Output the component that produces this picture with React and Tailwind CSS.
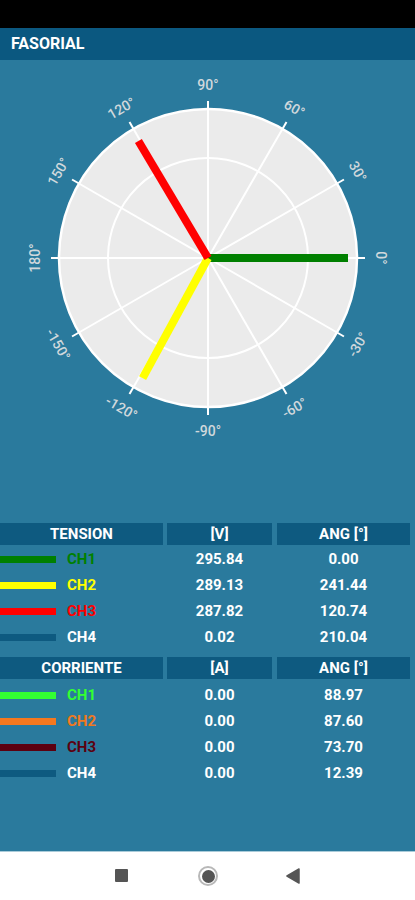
import React from "react";

const CX = 208;
const CY = 198;
const R = 149;

function Polar() {
  const angles = [0, 30, 60, 90, 120, 150, 180, -150, -120, -90, -60, -30];
  const phasors = [
    { L: 140, a: 0, c: "#008000" },
    { L: 136.8, a: 241.44, c: "#ffff00" },
    { L: 136.2, a: 120.74, c: "#ff0000" },
  ];
  const pt = (r, deg) => {
    const t = (deg * Math.PI) / 180;
    return [CX + r * Math.cos(t), CY - r * Math.sin(t)];
  };
  return (
    <svg width="415" height="450" viewBox="0 0 415 450" className="block">
      <circle cx={CX} cy={CY} r={R} fill="#ebebeb" stroke="#ffffff" strokeWidth="2.5" />
      <circle cx={CX} cy={CY} r={100} fill="none" stroke="#ffffff" strokeWidth="2" />
      {angles.map((a) => {
        const [x, y] = pt(157, a);
        return <line key={"l" + a} x1={CX} y1={CY} x2={x} y2={y} stroke="#ffffff" strokeWidth="2" />;
      })}
      {angles.map((a) => {
        const [x, y] = pt(173, a);
        let rot = 90 - a;
        while (rot > 90) rot -= 180;
        while (rot < -90) rot += 180;
        return (
          <text
            key={"t" + a}
            x={x}
            y={y}
            transform={`rotate(${rot} ${x} ${y})`}
            textAnchor="middle"
            dominantBaseline="central"
            fill="#d0d8dc"
            fontSize="14"
            fontWeight="500"
            fontFamily="Roboto, sans-serif"
          >
            {a + "°"}
          </text>
        );
      })}
      {phasors.map((p, i) => {
        const [x, y] = pt(p.L, p.a);
        return <line key={i} x1={CX} y1={CY} x2={x} y2={y} stroke={p.c} strokeWidth="8" />;
      })}
    </svg>
  );
}

function HeaderRow({ a, b, c }) {
  return (
    <div className="flex h-[22px] text-white font-bold text-[15px]">
      <div className="w-[163px] bg-[#0e5a80] flex items-center justify-center">{a}</div>
      <div className="w-[105px] ml-[4px] bg-[#0e5a80] flex items-center justify-center">{b}</div>
      <div className="w-[133px] ml-[5px] bg-[#0e5a80] flex items-center justify-center">{c}</div>
    </div>
  );
}

function Row2({ color, text, label, v, ang }) {
  return (
    <div className="flex h-[26px] items-center text-white font-bold text-[15px]">
      <div className="w-[163px] flex items-center">
        <div className="w-[56px] h-[7px]" style={{ background: color }} />
        <span className="ml-[11px]" style={{ color: text }}>
          {label}
        </span>
      </div>
      <div className="w-[105px] ml-[4px] text-center">{v}</div>
      <div className="w-[133px] ml-[5px] text-center">{ang}</div>
    </div>
  );
}

export default function App() {
  const tension = [
    { color: "#008000", text: "#008000", label: "CH1", v: "295.84", ang: "0.00" },
    { color: "#ffff00", text: "#ffff00", label: "CH2", v: "289.13", ang: "241.44" },
    { color: "#ff0000", text: "#ff0000", label: "CH3", v: "287.82", ang: "120.74" },
    { color: "#0e5a80", text: "#ffffff", label: "CH4", v: "0.02", ang: "210.04" },
  ];
  const corriente = [
    { color: "#33ff33", text: "#33ff33", label: "CH1", v: "0.00", ang: "88.97" },
    { color: "#f5781e", text: "#f07820", label: "CH2", v: "0.00", ang: "87.60" },
    { color: "#5c0010", text: "#5c0010", label: "CH3", v: "0.00", ang: "73.70" },
    { color: "#0e5a80", text: "#ffffff", label: "CH4", v: "0.00", ang: "12.39" },
  ];
  return (
    <div className="w-[415px] h-[900px] flex flex-col bg-[#2a7a9d]" style={{ fontFamily: "Roboto, 'Liberation Sans', sans-serif" }}>
      <div className="h-[28px] bg-black shrink-0" />
      <div className="h-[32px] bg-[#0b5880] shrink-0 flex items-center px-[11px] text-white font-bold text-[16px]">
        FASORIAL
      </div>
      <div className="flex-1 flex flex-col">
        <Polar />
        <div className="mt-[13px]">
          <HeaderRow a="TENSION" b="[V]" c="ANG [°]" />
          <div className="mt-[1px]">
            {tension.map((r, i) => (
              <Row2 key={i} {...r} />
            ))}
          </div>
          <div className="mt-[7px]">
            <HeaderRow a="CORRIENTE" b="[A]" c="ANG [°]" />
          </div>
          <div className="mt-[3px]">
            {corriente.map((r, i) => (
              <Row2 key={i} {...r} />
            ))}
          </div>
        </div>
      </div>
      <div className="h-[49px] shrink-0 bg-white border-t border-[#a9cbd9]">
        <div className="relative w-full h-full">
          <div className="absolute left-[115px] top-[17px] w-[13px] h-[13px] bg-[#555555] rounded-[1px]" />
          <div className="absolute left-[198px] top-[14px] w-[20px] h-[20px] rounded-full border-[2px] border-[#b8b8b8] flex items-center justify-center">
            <div className="w-[13px] h-[13px] rounded-full bg-[#555555]" />
          </div>
          <svg className="absolute left-[286px] top-[16px]" width="14" height="16" viewBox="0 0 14 16">
            <path d="M13 1 L1 8 L13 15 Z" fill="#555555" stroke="#555555" strokeLinejoin="round" strokeWidth="1.5" />
          </svg>
        </div>
      </div>
    </div>
  );
}
